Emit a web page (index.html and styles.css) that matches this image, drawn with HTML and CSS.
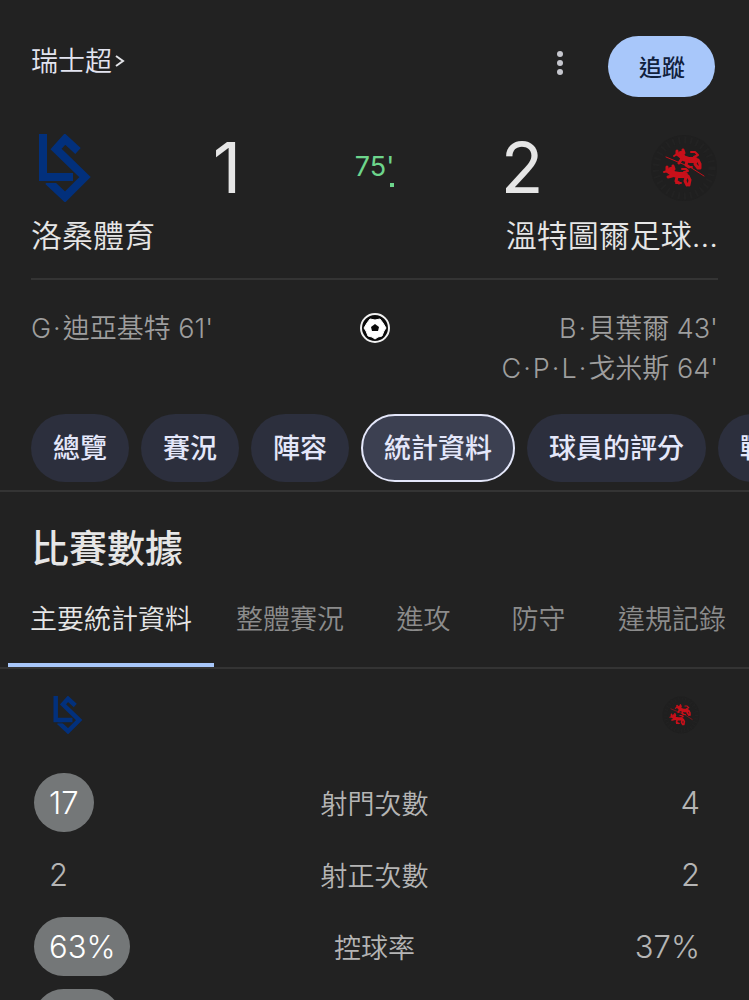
FILE: index.html
```html
<!DOCTYPE html>
<html lang="zh-Hant">
<head>
  <meta charset="UTF-8">
  <meta name="viewport" content="width=device-width, initial-scale=1">
  <title>洛桑體育 1 - 2 溫特圖爾足球</title>
  <link rel="stylesheet" href="styles.css">
</head>
<body>
  <!-- shared club logos -->
  <svg class="defs" width="0" height="0" aria-hidden="true">
    <symbol id="logo-ls" viewBox="0 0 68 68">
      <g fill="none" stroke="#02307c" stroke-width="8">
        <path d="M47 17 34 5 25 15 54 43 34 63 17 47"/>
        <path stroke="#222" stroke-width="2" d="M8 48H38"/>
        <path d="M12 0V43H42"/>
      </g>
    </symbol>
    <symbol id="logo-fcw" viewBox="0 0 68 68">
      <circle cx="34" cy="34" r="33" fill="#1f1f1f"/>
      <circle cx="34" cy="34" r="28" fill="none" stroke="#222" stroke-width="7" stroke-dasharray="2 4"/>
      <g fill="none" stroke="#c8101a" stroke-linecap="round" stroke-linejoin="round">
        <path stroke-width="6" d="M31 20 33 24 39 26 45 26"/>
        <path stroke-width="3" d="M27 17 27 20 31 23M33 16 34 19M31 26 29 29M37 27 36 31 39 33M46 27 45 30 48 34M48 26 50 30 50 34"/>
        <path stroke-width="2" d="M44 23 48 21 45 18 41 18M39 33 42 33M48 34 50 34M24 22 27 20"/>
        <path stroke-width="1" d="M16 23 28 28 40 33 54 42"/>
      </g>
      <g fill="none" stroke="#c8101a" stroke-linecap="round" stroke-linejoin="round">
        <path stroke-width="6" d="M21 36 23 40 29 41 35 41"/>
        <path stroke-width="3" d="M17 33 17 37 21 40M23 32 24 35M22 42 18 43M27 43 26 47 29 49M36 43 35 47 37 51M38 42 40 46 39 51"/>
        <path stroke-width="2" d="M34 38 38 37 36 35 32 35M14 38 18 37M26 49 31 49"/>
      </g>
    </symbol>
  </svg>

  <main class="page">
    <header class="topbar">
      <a class="league" href="#">瑞士超
        <svg width="10" height="14" viewBox="0 0 10 14"><path d="M1 1 8 6 1 11" fill="none" stroke="#e3e4e8" stroke-width="2"/></svg>
      </a>
      <button class="more" type="button" aria-label="更多">
        <svg width="6" height="24" viewBox="0 0 6 24" fill="#c6c7ce"><circle cx="3" cy="3" r="3"/><circle cx="3" cy="12" r="3"/><circle cx="3" cy="21" r="3"/></svg>
      </button>
      <button class="follow" type="button">追蹤</button>
    </header>

    <section class="match">
      <div class="score">
        <svg class="logo"><use href="#logo-ls"/></svg>
        <span class="goals">1</span>
        <span class="minute">75'</span>
        <span class="goals">2</span>
        <svg class="logo"><use href="#logo-fcw"/></svg>
      </div>
      <div class="teams">
        <span>洛桑體育</span>
        <span>溫特圖爾足球…</span>
      </div>
      <div class="scorers">
        <div>G<span class="dot">·</span>迪亞基特 61'</div>
        <svg class="ball" viewBox="0 0 32 32">
          <circle cx="16" cy="16" r="14" fill="#0a0a0a" stroke="#f2f2f2" stroke-width="2"/>
          <path fill="#fff" stroke="#fff" stroke-linejoin="round" d="M11 7 16 8 21 7 24 11 27 16 25 19 23 24 19 25 16 27 13 25 9 24 7 19 5 16 8 11Z"/>
          <path fill="#0a0a0a" d="M16 12 20 15 19 19H13L12 15Z"/>
        </svg>
        <div class="away">B<span class="dot">·</span>貝葉爾 43'<br>C<span class="dot">·</span>P<span class="dot">·</span>L<span class="dot">·</span>戈米斯 64'</div>
      </div>
    </section>

    <nav class="chips">
      <a class="chip" href="#">總覽</a>
      <a class="chip" href="#">賽況</a>
      <a class="chip" href="#">陣容</a>
      <a class="chip active" href="#">統計資料</a>
      <a class="chip" href="#">球員的評分</a>
      <a class="chip" href="#">戰績</a>
    </nav>

    <section>
      <h2 class="title">比賽數據</h2>
      <div class="tabs" role="tablist">
        <button class="tab active" type="button" role="tab" aria-selected="true">主要統計資料</button>
        <button class="tab" type="button" role="tab">整體賽況</button>
        <button class="tab" type="button" role="tab">進攻</button>
        <button class="tab" type="button" role="tab">防守</button>
        <button class="tab" type="button" role="tab">違規記錄</button>
      </div>

      <table class="stats">
        <thead>
          <tr>
            <th><svg class="logo-small"><use href="#logo-ls"/></svg></th>
            <th></th>
            <th><svg class="logo-small"><use href="#logo-fcw"/></svg></th>
          </tr>
        </thead>
        <tbody>
          <tr><td><span class="value best">17</span></td><td>射門次數</td><td><span class="value">4</span></td></tr>
          <tr><td><span class="value">2</span></td><td>射正次數</td><td><span class="value">2</span></td></tr>
          <tr><td><span class="value best">63%</span></td><td>控球率</td><td><span class="value">37%</span></td></tr>
          <tr><td><span class="value best">438</span></td><td>傳球次數</td><td><span class="value">256</span></td></tr>
        </tbody>
      </table>
    </section>
  </main>
</body>
</html>
```

FILE: styles.css
```css
* { box-sizing: border-box; }
body { margin: 0; background: #222; color: #e6e6e6; font-family: Inter, "Noto Sans CJK TC", sans-serif; font-size: 27px; font-weight: 350; }
a { color: inherit; text-decoration: none; }
button { border: 0; padding: 0; background: none; color: inherit; font: inherit; cursor: pointer; }
svg { display: block; flex: none; }
.defs { position: absolute; }
.page { height: 100vh; overflow: hidden; }

.topbar { display: flex; align-items: flex-start; padding: 36px 34px 0 31px; }
.league { display: flex; align-items: center; gap: 3px; margin-right: auto; line-height: 52px; color: #e3e4f0; }
.more { display: flex; align-items: center; justify-content: center; width: 48px; height: 54px; margin-right: 24px; }
.follow { height: 61px; padding: 0 30px 2px 31px; border-radius: 31px; background: #a8c7fa; color: #10203c; font-size: 23px; font-weight: 500; }

.match { padding: 36px 31px 0; }
.score { display: grid; grid-template-columns: 68px 1fr auto 1fr 68px; align-items: center; height: 70px; }
.logo { width: 68px; height: 68px; }
.goals { text-align: center; font-size: 70px; font-weight: 400; line-height: 70px; }
.minute { position: relative; padding-bottom: 4px; color: #6dd58c; font-weight: 400; }
.minute::after { content: ""; position: absolute; right: 0; bottom: 0; width: 4px; height: 4px; background: #6dd58c; }
.teams { display: flex; justify-content: space-between; padding: 11px 0 20px; border-bottom: 2px solid #343434; font-size: 31px; line-height: 44px; }
.scorers { display: grid; grid-template-columns: 1fr 32px 1fr; padding: 29px 0 25px; color: #9e9e9e; line-height: 40px; }
.ball { width: 32px; height: 32px; margin-top: 3px; }
.away { text-align: right; }
.dot { margin: 0 2px; }

.chips { display: flex; gap: 12px; padding: 0 0 8px 31px; overflow: hidden; border-bottom: 2px solid #343434; }
.chip { flex: none; height: 68px; padding: 0 22px; border-radius: 34px; background: #2c2f3d; color: #e4e7fa; font-weight: 500; line-height: 70px; }
.chip.active { border: 2px solid #e4e7fa; padding: 0 21px; background: #3c4051; line-height: 66px; }

.title { margin: 0; padding: 28px 31px 0; font-size: 38px; font-weight: 500; line-height: 56px; }
.tabs { display: flex; padding: 0 8px; overflow: hidden; border-bottom: 2px solid #343434; }
.tab { flex: none; min-width: 115px; height: 91px; padding: 0 22px; border-bottom: 4px solid transparent; color: #8c8c8c; line-height: 83px; }
.tab.active { border-bottom-color: #a8c7fa; color: #e6e6e6; }

.stats { width: 100%; padding: 0 34px; border-spacing: 0; table-layout: fixed; }
.stats th { height: 97px; padding: 0 15px 6px; vertical-align: middle; }
.stats td { height: 72px; padding: 0; text-align: center; color: #b5b5b5; }
.stats td:first-child { text-align: left; }
.stats td:last-child { text-align: right; }
.logo-small { width: 38px; height: 38px; }
.stats th:last-child .logo-small { margin-left: auto; }
.value { display: inline-block; height: 59px; padding: 0 15px; border-radius: 30px; font-size: 31px; line-height: 59px; }
.best { background: #747778; color: #fff; }
```
